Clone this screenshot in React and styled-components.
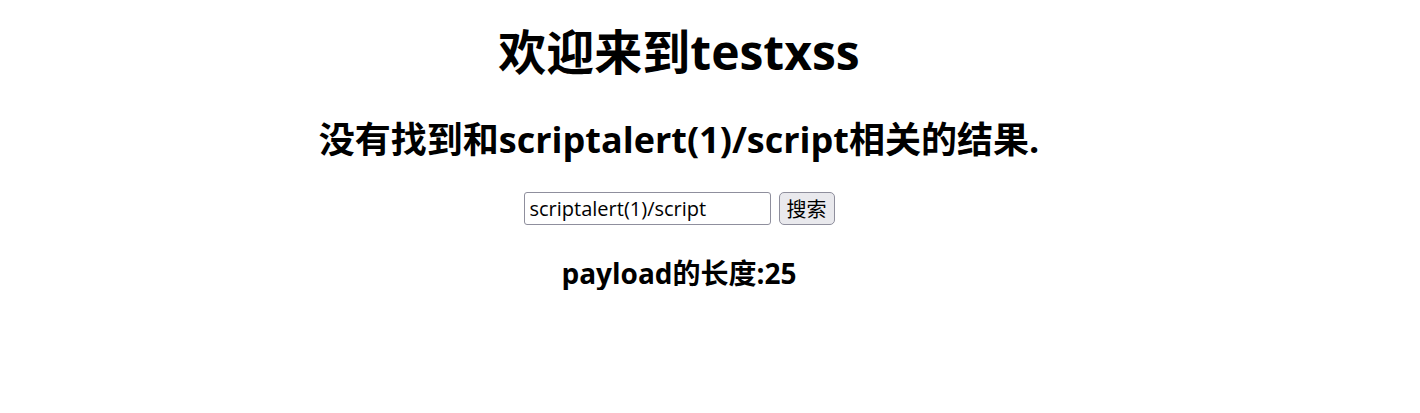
import React from "react";
import styled, {createGlobalStyle} from "styled-components";

const GlobalStyle = createGlobalStyle`
    html, body {
        margin: 0;
        padding: 0;
        background: #ffffff;
        color: #000000;
        font-family: "Open Sans", "Noto Sans CJK SC", sans-serif;
    }
`;

const Page = styled.div`
    width: 1358px;
    display: flex;
    flex-direction: column;
    align-items: center;
    padding-top: 24px;
`;

const Title = styled.h1`
    margin: 0;
    font-size: 48px;
    line-height: 56px;
    font-weight: 700;
`;

const Result = styled.h2`
    margin: 38px 0 0;
    font-size: 36px;
    line-height: 44px;
    font-weight: 700;
`;

const SearchForm = styled.form`
    margin-top: 30px;
    display: flex;
    align-items: center;
    gap: 8px;
`;

const SearchInput = styled.input`
    box-sizing: border-box;
    width: 247px;
    height: 33px;
    padding: 0 5px;
    border: 1px solid #8f8f9d;
    border-radius: 3px;
    font-family: "Open Sans", "Noto Sans CJK SC", sans-serif;
    font-size: 20px;
    color: #000;
    outline: none;
`;

const SearchButton = styled.button`
    box-sizing: border-box;
    height: 33px;
    padding: 0 7px;
    border: 1px solid #8f8f9d;
    border-radius: 5px;
    background: #e9e9ed;
    font-family: "Noto Sans CJK SC", sans-serif;
    font-size: 20px;
    color: #000;
`;

const Length = styled.h3`
    margin: 31px 0 0;
    font-size: 28px;
    line-height: 34px;
    font-weight: 700;
`;

const payload = "scriptalert(1)/script";

const App = () => (
    <>
        <GlobalStyle/>
        <Page>
            <Title>欢迎来到testxss</Title>
            <Result>没有找到和{payload}相关的结果.</Result>
            <SearchForm onSubmit={e => e.preventDefault()}>
                <SearchInput name="keyword" defaultValue={payload}/>
                <SearchButton type="submit">搜索</SearchButton>
            </SearchForm>
            <Length>payload的长度:{payload.length + 4}</Length>
        </Page>
    </>
);

export default App;
